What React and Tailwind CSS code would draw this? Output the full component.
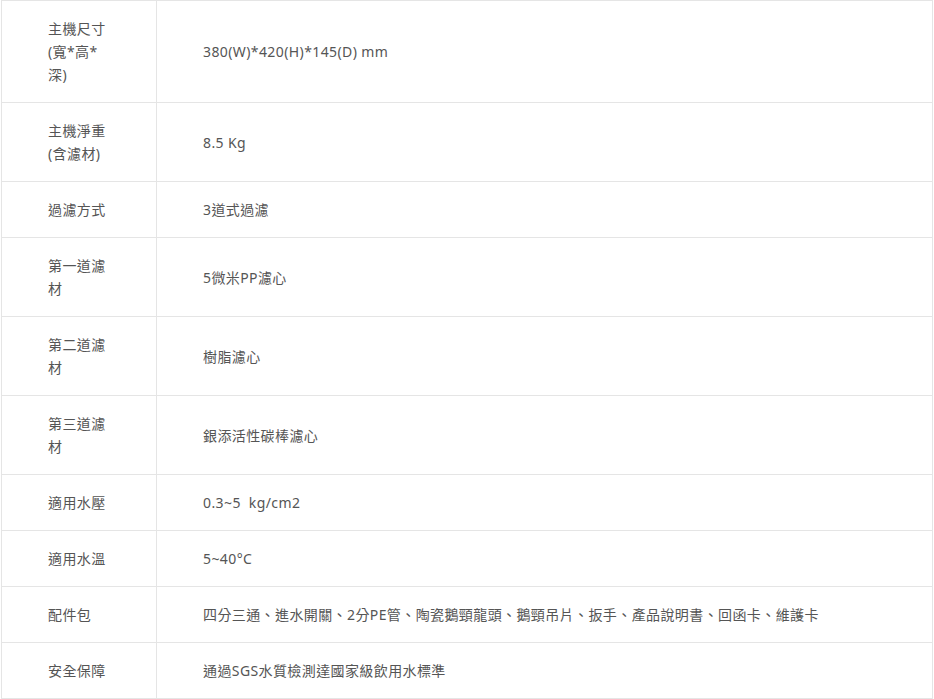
import React from 'react';

const rows = [
  ['主機尺寸(寬*高*深)', '380(W)*420(H)*145(D) mm'],
  ['主機淨重(含濾材)', '8.5 Kg'],
  ['過濾方式', '3道式過濾'],
  ['第一道濾材', '5微米PP濾心'],
  ['第二道濾材', '樹脂濾心'],
  ['第三道濾材', '銀添活性碳棒濾心'],
  ['適用水壓', '0.3~5  kg/cm2'],
  ['適用水溫', '5~40°C'],
  ['配件包', '四分三通、進水開關、2分PE管、陶瓷鵝頸龍頭、鵝頸吊片、扳手、產品說明書、回函卡、維護卡'],
  ['安全保障', '通過SGS水質檢測達國家級飲用水標準'],
];

export default function App() {
  return (
    <div className="bg-white min-h-screen font-['Noto_Sans','Noto_Sans_CJK_TC',sans-serif] text-[14px] leading-[23px] tracking-[0.4px] text-[#555]">
      <table className="ml-px w-[932px] border-collapse">
        <tbody>
          {rows.map(([label, value]) => (
            <tr key={label}>
              <td className="w-[155px] border border-[#e5e5e5] px-[46px] py-4 align-middle break-all">
                {label}
              </td>
              <td className="border border-[#e5e5e5] px-[46px] py-4 align-middle whitespace-pre">
                {value}
              </td>
            </tr>
          ))}
        </tbody>
      </table>
    </div>
  );
}
